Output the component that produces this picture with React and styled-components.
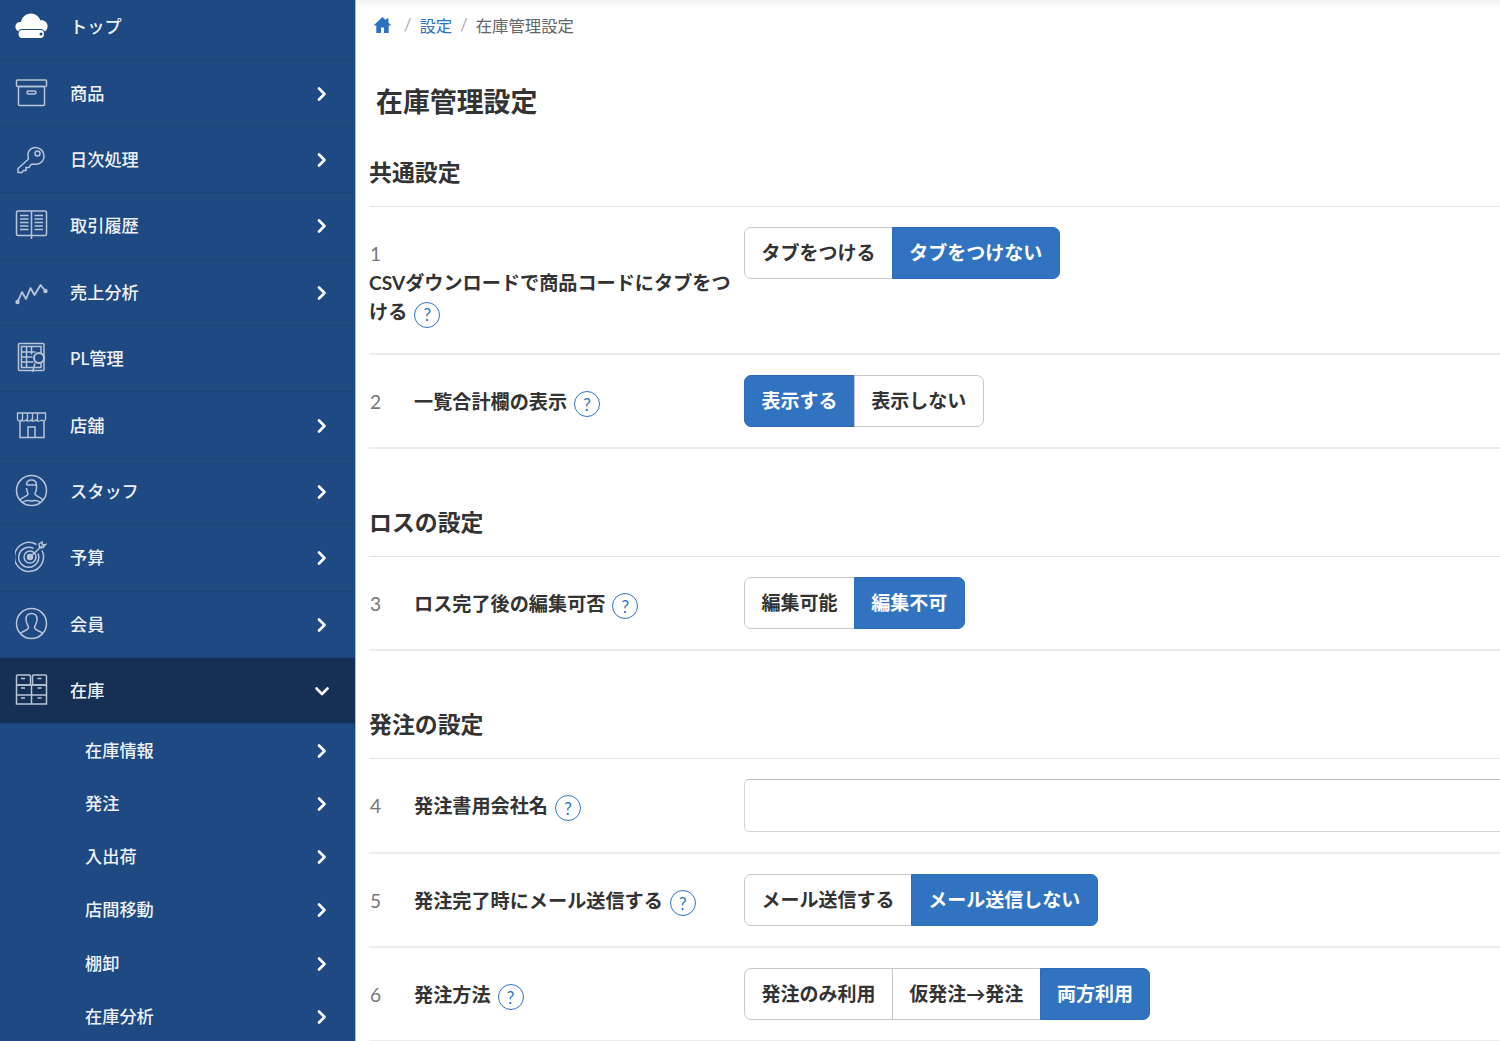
import styled, { createGlobalStyle } from 'styled-components';

const GlobalStyle = createGlobalStyle`
  html, body {
    margin: 0;
    height: 1041px;
    overflow: hidden;
    background: #fff;
    font-family: Lato, "Noto Sans CJK JP", "Noto Sans", sans-serif;
    color: #333;
  }
  * { box-sizing: border-box; }
`;

const Page = styled.div`
  display: flex;
  width: 1500px;
  height: 1041px;
  overflow: hidden;
`;

/* Sidebar */
const Sidebar = styled.nav`
  flex: 0 0 356px;
  height: 1041px;
  overflow: hidden;
  background: #1f4982;
  border-right: 1px solid #a9bbd6;
`;

// the menu is scrolled a little, first row is cut off at the top
const MenuList = styled.div`
  margin-top: -6px;
`;

const MenuRow = styled.div`
  display: flex;
  align-items: center;
  height: 66.4px;
  padding: 0 26px 2px 15px;
  border-bottom: 1px solid #1c4278;
  background: ${({ $active }) => ($active ? '#162f55' : 'transparent')};
  color: #eef2f7;
  font-size: 17.2px;
  font-weight: 500;
`;

const MenuIcon = styled.svg`
  flex: 0 0 33px;
  width: 33px;
  height: 33px;
  margin-right: 22px;
  fill: none;
  stroke: #b8c5d8;
  stroke-width: 1.5;
`;

const MenuLabel = styled.span`
  flex: 1;
`;

const SubRow = styled.div`
  display: flex;
  align-items: center;
  height: 53.2px;
  padding: 0 26px 3px 85px;
  color: #eef2f7;
  font-size: 17.2px;
  font-weight: 500;
`;

const Chevron = styled.svg`
  width: 14px;
  height: 14px;
  margin-top: 3px;
  fill: none;
  stroke: #fff;
  stroke-width: 2.6;
  stroke-linecap: round;
  stroke-linejoin: round;
`;

/* Main */
const Main = styled.main`
  flex: 1;
  min-width: 0;
  overflow: hidden;
  padding-left: 13px;
  background: linear-gradient(#f3f3f3, #fff 8px);
`;

const Crumbs = styled.div`
  display: flex;
  align-items: center;
  height: 52px;
  padding: 0 0 3px 4px;
  font-size: 16.4px;
  color: #666;
`;

const Slash = styled.span`
  margin: 0 8px 0 ${({ $wide }) => ($wide ? '12px' : '8px')};
  color: #aaa;
`;

const CrumbLink = styled.span`
  color: #2f73c0;
`;

const Title = styled.h1`
  margin: 0;
  padding: 27px 0 0 7px;
  height: 83px;
  font-size: 26.9px;
  line-height: 46px;
  font-weight: 700;
  color: #333;
`;

const SectionTitle = styled.h2`
  display: flex;
  align-items: flex-end;
  margin: ${({ $gap }) => $gap}px 0 0;
  height: 72px;
  padding: 0 0 17px 0;
  border-bottom: 1px solid #e2e2e2;
  font-size: 22.9px;
  line-height: 34px;
  font-weight: 700;
  color: #333;
`;

const Row = styled.div`
  display: flex;
  align-items: flex-start;
  border-bottom: 2px solid #ededed;
  min-height: 94px;
`;

const Label = styled.div`
  flex: 0 0 375px;
  padding: 32px 8px 26.5px 0;
  font-size: 19.15px;
  line-height: 29px;
  font-weight: 700;
  color: #333;
`;

const Num = styled.span`
  display: ${({ $block }) => ($block ? 'block' : 'inline-block')};
  width: 45px;
  padding-left: 1px;
  font-weight: 400;
  color: #777;
`;

const Help = styled.span`
  display: inline-flex;
  align-items: center;
  justify-content: center;
  width: 26px;
  height: 26px;
  margin: -4px 0 -4px 7px;
  border: 1px solid #2f73c0;
  border-radius: 50%;
  color: #2f73c0;
  font-size: 17px;
  font-weight: 400;
  vertical-align: -2px;
`;

const Control = styled.div`
  flex: 1;
  min-width: 0;
  padding-top: ${({ $block }) => ($block ? '20px' : '20.5px')};
`;

const Toggle = styled.div`
  display: inline-flex;
  height: 52px;
`;

const ToggleBtn = styled.div`
  display: flex;
  align-items: center;
  padding: 0 16.4px 3px;
  border: 1px solid ${({ $on }) => ($on ? '#2c6bb6' : '#c8c8c8')};
  margin-left: -1px;
  background: ${({ $on }) => ($on ? '#3173c1' : '#fff')};
  color: ${({ $on }) => ($on ? '#fff' : '#333')};
  font-size: 19px;
  font-weight: 700;
  white-space: nowrap;
  &:first-child {
    margin-left: 0;
    border-radius: 7px 0 0 7px;
  }
  &:last-child {
    border-radius: 0 7px 7px 0;
  }
`;

const TextBox = styled.div`
  width: 800px;
  height: 53px;
  margin-bottom: 19.5px;
  border: 1px solid #d2d2d2;
  border-top-color: #bdbdbd;
  border-radius: 5px;
  background: #fff;
`;

const icons = {
  cloud: (
    <g>
      <path
        fill="#fff"
        stroke="none"
        d="M5 22.500C1.500 22.500 0 19 .5 16.500c.5-2.500 3-4 5.500-3.500C7 8 11 4.500 16 4.500c4.500 0 8 3 9.500 7 3-1 6.500 1.500 7 4.500.3 3.500-1 6.500-4 6.500z"
      />
      <rect x="3" y="20.500" width="26.500" height="9" rx="4" fill="#fff" stroke="#1f4982" strokeWidth="1.200" />
      <circle cx="26" cy="25" r="1.500" fill="#1f4982" stroke="none" />
    </g>
  ),
  box: (
    <g>
      <rect x="1.500" y="4" width="30" height="6.500" rx="1" />
      <rect x="3.500" y="10.500" width="26" height="19" rx="1" />
      <rect x="12" y="15" width="9" height="3" rx="1.500" />
    </g>
  ),
  key: (
    <g>
      <path d="M13 18.500 3 27.500v4h4l1.500-2h2.500v-3h3l2-3 2-.5c6 1.500 11-2.500 11-8 0-5-4-8.500-8.500-8.500-5.500 0-9 5-7 11z" transform="translate(0 -1)" />
      <circle cx="22.500" cy="11.500" r="2.500" />
    </g>
  ),
  book: (
    <g>
      <rect x="1.500" y="3" width="30" height="24.500" rx="1.500" />
      <path d="M16.500 3v28M5 7.500h8.500M5 11h8.500M5 14.500h8.500M5 18h8.500M5 21.500h8.500M19.500 7.500H28M19.500 11H28M19.500 14.500H28M19.500 18H28M19.500 21.500H28" />
    </g>
  ),
  chart: (
    <g strokeLinejoin="round" strokeWidth="1.800">
      <path d="M2.500 27 7 17l4 7 4.500-11 4 7 6-10 5 6" />
      <circle cx="2.500" cy="27" r="1.300" fill="#b8c5d8" />
      <circle cx="30.500" cy="16" r="1.300" fill="#b8c5d8" />
    </g>
  ),
  pl: (
    <g>
      <rect x="3.500" y="2.500" width="25.500" height="27" rx="1" />
      <rect x="6.500" y="5.500" width="19.500" height="21" />
      <path d="M6.500 11h14M6.500 16h11M6.500 21h12M11.500 5.500V26M16.500 5.500v8" />
      <circle cx="24" cy="17" r="5" fill="#1f4982" strokeWidth="2" />
      <path d="M20 22l-2.500 9" />
    </g>
  ),
  store: (
    <g>
      <path d="M2.500 5h28v6c0 2-2.800 2.500-4 1-1 1.500-5 1.500-5.500 0-.8 1.500-4.500 1.500-5 0-.8 1.500-4.500 1.500-5 0-.8 1.500-4.500 1.500-5 0C5 13.500 2.500 13 2.500 11zM7.500 5v7M12.500 5v8M17.500 5v8M22.500 5v8" strokeWidth="1.300" />
      <path d="M5 13v16.500h24V13M13 29.500V19h7v10.500" />
    </g>
  ),
  staff: (
    <g>
      <circle cx="16.500" cy="16.500" r="15" />
      <path d="M11.500 11c0-3 2-5 5-5s5 2 5 5v3c0 3-1.500 5-1.500 6 0 2 6 3 8 6M11.500 11h10M11.500 14c0 3 1.500 5 1.500 6 0 2-6 3-8 6M8 28c3-2 5-2 8.500-1 3.500-1 5.500-1 8.500 1" />
    </g>
  ),
  target: (
    <g>
      <path d="M27 10.500A14.500 14.500 0 1 1 21.500 4.500" />
      <path d="M23 13.500A10 10 0 1 1 18.500 8.500" />
      <circle cx="15" cy="17" r="6" />
      <circle cx="15" cy="17" r="2.500" fill="#b8c5d8" />
      <path d="M15 17 27 6M24 4l3-2 .5 3 3-.5-2.500 3-3.500.5z" />
    </g>
  ),
  member: (
    <g>
      <circle cx="16.500" cy="16.500" r="15" />
      <path d="M5.500 26.500c2-3 8-3 8-6 0-1.500-2.500-4-2.500-8 0-3.500 2-6 5.500-6s5.500 2.500 5.500 6c0 4-2.500 6.500-2.500 8 0 3 6 3 8 6" />
    </g>
  ),
  stock: (
    <g>
      <rect x="1.500" y="2" width="14" height="10" rx="1" />
      <rect x="17.500" y="2" width="14" height="10" rx="1" />
      <path d="M1.500 12h30M1.500 12v10h30V12M16.500 12v19M1.500 22v9h30v-9M6 5.500h4M22.500 5.500h4M6 15h4M22.500 15h4M6 25h4M22.500 25h4" />
    </g>
  ),
};

const menu = [
  { label: 'トップ', icon: 'cloud' },
  { label: '商品', icon: 'box', arrow: true },
  { label: '日次処理', icon: 'key', arrow: true },
  { label: '取引履歴', icon: 'book', arrow: true },
  { label: '売上分析', icon: 'chart', arrow: true },
  { label: 'PL管理', icon: 'pl' },
  { label: '店舗', icon: 'store', arrow: true },
  { label: 'スタッフ', icon: 'staff', arrow: true },
  { label: '予算', icon: 'target', arrow: true },
  { label: '会員', icon: 'member', arrow: true },
];

const subMenu = ['在庫情報', '発注', '入出荷', '店間移動', '棚卸', '在庫分析'];

function ChevronRight() {
  return (
    <Chevron viewBox="0 0 14 14">
      <path d="M4 1.500 9.500 7 4 12.500" />
    </Chevron>
  );
}

function ChevronDown() {
  return (
    <Chevron viewBox="0 0 14 14">
      <path d="M1.500 4.500 7 10l5.500-5.500" />
    </Chevron>
  );
}

function SettingRow({ num, label, block, options, on, children }) {
  return (
    <Row>
      <Label>
        <Num $block={block}>{num}</Num>
        {label}
        <Help>?</Help>
      </Label>
      <Control $block={block}>
        {options ? (
          <Toggle>
            {options.map((opt, i) => (
              <ToggleBtn key={opt} $on={i === on}>
                {opt}
              </ToggleBtn>
            ))}
          </Toggle>
        ) : (
          children
        )}
      </Control>
    </Row>
  );
}

export default function App() {
  return (
    <Page>
      <GlobalStyle />
      <Sidebar>
        <MenuList>
          {menu.map((item) => (
            <MenuRow key={item.label}>
              <MenuIcon viewBox="0 0 33 33">{icons[item.icon]}</MenuIcon>
              <MenuLabel>{item.label}</MenuLabel>
              {item.arrow && <ChevronRight />}
            </MenuRow>
          ))}
          <MenuRow $active>
            <MenuIcon viewBox="0 0 33 33">{icons.stock}</MenuIcon>
            <MenuLabel>在庫</MenuLabel>
            <ChevronDown />
          </MenuRow>
          {subMenu.map((label) => (
            <SubRow key={label}>
              <MenuLabel>{label}</MenuLabel>
              <ChevronRight />
            </SubRow>
          ))}
        </MenuList>
      </Sidebar>
      <Main>
        <Crumbs>
          <svg width="19" height="18" viewBox="0 0 19 18">
            <path
              fill="#2f73c0"
              d="M9.500 1 0.500 9.500h2.800V17h4.700v-5.500h3V17h4.700V9.500h2.800L15.500 6.700V2.500h-2.500v1.800z"
            />
          </svg>
          <Slash $wide>/</Slash>
          <CrumbLink>設定</CrumbLink>
          <Slash>/</Slash>
          在庫管理設定
        </Crumbs>
        <Title>在庫管理設定</Title>
        <SectionTitle $gap={0}>共通設定</SectionTitle>
        <SettingRow
          num="1"
          block
          label="CSVダウンロードで商品コードにタブをつける"
          options={['タブをつける', 'タブをつけない']}
          on={1}
        />
        <SettingRow
          num="2"
          label="一覧合計欄の表示"
          options={['表示する', '表示しない']}
          on={0}
        />
        <SectionTitle $gap={36}>ロスの設定</SectionTitle>
        <SettingRow
          num="3"
          label="ロス完了後の編集可否"
          options={['編集可能', '編集不可']}
          on={1}
        />
        <SectionTitle $gap={36}>発注の設定</SectionTitle>
        <SettingRow num="4" label="発注書用会社名">
          <TextBox />
        </SettingRow>
        <SettingRow
          num="5"
          label="発注完了時にメール送信する"
          options={['メール送信する', 'メール送信しない']}
          on={1}
        />
        <SettingRow
          num="6"
          label="発注方法"
          options={['発注のみ利用', '仮発注→発注', '両方利用']}
          on={2}
        />
      </Main>
    </Page>
  );
}
